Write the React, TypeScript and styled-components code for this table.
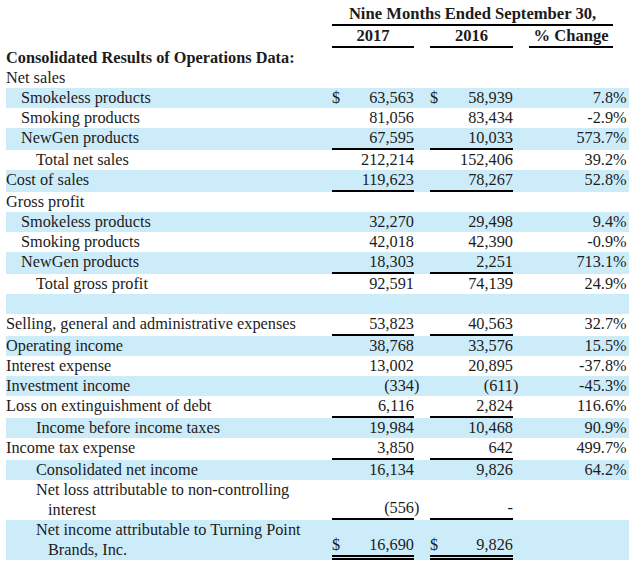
import React from "react";
import styled, { createGlobalStyle, css } from "styled-components";

const GlobalStyle = createGlobalStyle`
  html, body {
    margin: 0;
    padding: 0;
    background: #ffffff;
  }
  body {
    font-family: "Liberation Serif", "Times New Roman", serif;
  }
`;

const SHADE = "#cdecfa";
const INK = "#1c1c1c";

type Rule = "single" | "double" | undefined;

const Page = styled.div`
  padding: 4px 0 0 6px;
`;

const Table = styled.table`
  border-collapse: separate;
  border-spacing: 0;
  table-layout: fixed;
  width: 623px;
  font-size: 16.3px;
  line-height: 20px;
  color: ${INK};
`;

const Row = styled.tr<{ $shaded?: boolean }>`
  background: ${(p) => (p.$shaded ? SHADE : "transparent")};
`;

const cellBase = css`
  padding: 0;
  vertical-align: bottom;
  white-space: nowrap;
`;

/* A rule under a figure; "ghost" keeps the same depth without a visible line so
   every value in the row sits on one baseline. */
const ruleCss = (rule: Rule, ghost = false) => {
  const color = ghost ? "transparent" : "#000";
  if (rule === "single") {
    return css`
      border-bottom: 2px solid ${color};
    `;
  }
  if (rule === "double") {
    return css`
      border-bottom: 5px double ${color};
    `;
  }
  return css``;
};

const HeadCell = styled.th<{ $ruled?: boolean }>`
  ${cellBase}
  font-size: 16.6px;
  font-weight: bold;
  text-align: center;
  ${(p) => (p.$ruled ? ruleCss("single") : "")}
`;

const LabelCell = styled.td<{ $indent: number; $bold?: boolean }>`
  ${cellBase}
  white-space: normal;
  vertical-align: top;
  text-align: left;
  font-weight: ${(p) => (p.$bold ? "bold" : "normal")};
  padding-left: ${(p) => p.$indent + 12}px;
  text-indent: -12px;
`;

const SignCell = styled.td<{ $rule?: Rule }>`
  ${cellBase}
  text-align: left;
  ${(p) => ruleCss(p.$rule)}
`;

const NumCell = styled.td<{ $rule?: Rule }>`
  ${cellBase}
  text-align: right;
  ${(p) => ruleCss(p.$rule)}
`;

const ParenCell = styled.td<{ $rule?: Rule }>`
  ${cellBase}
  text-align: left;
  ${(p) => ruleCss(p.$rule, true)}
`;

const GapCell = styled.td`
  ${cellBase}
`;

const PctCell = styled.td<{ $rule?: Rule }>`
  ${cellBase}
  text-align: right;
  ${(p) => ruleCss(p.$rule, true)}
`;

const PctSignCell = styled.td<{ $rule?: Rule }>`
  ${cellBase}
  text-align: left;
  ${(p) => ruleCss(p.$rule, true)}
`;

type Amount = { value: string; sign?: boolean; neg?: boolean };

type Line = {
  label?: string;
  indent?: number;
  bold?: boolean;
  a?: Amount;
  b?: Amount;
  pct?: string;
  rule?: Rule;
};

const n = (value: string, extra: Partial<Amount> = {}): Amount => ({ value, ...extra });

const lines: Line[] = [
  { label: "Consolidated Results of Operations Data:", bold: true },
  { label: "Net sales" },
  { label: "Smokeless products", indent: 15, a: n("63,563", { sign: true }), b: n("58,939", { sign: true }), pct: "7.8" },
  { label: "Smoking products", indent: 15, a: n("81,056"), b: n("83,434"), pct: "-2.9" },
  { label: "NewGen products", indent: 15, a: n("67,595"), b: n("10,033"), pct: "573.7", rule: "single" },
  { label: "Total net sales", indent: 30, a: n("212,214"), b: n("152,406"), pct: "39.2" },
  { label: "Cost of sales", a: n("119,623"), b: n("78,267"), pct: "52.8", rule: "single" },
  { label: "Gross profit" },
  { label: "Smokeless products", indent: 15, a: n("32,270"), b: n("29,498"), pct: "9.4" },
  { label: "Smoking products", indent: 15, a: n("42,018"), b: n("42,390"), pct: "-0.9" },
  { label: "NewGen products", indent: 15, a: n("18,303"), b: n("2,251"), pct: "713.1", rule: "single" },
  { label: "Total gross profit", indent: 30, a: n("92,591"), b: n("74,139"), pct: "24.9" },
  {},
  { label: "Selling, general and administrative expenses", a: n("53,823"), b: n("40,563"), pct: "32.7", rule: "single" },
  { label: "Operating income", a: n("38,768"), b: n("33,576"), pct: "15.5" },
  { label: "Interest expense", a: n("13,002"), b: n("20,895"), pct: "-37.8" },
  { label: "Investment income", a: n("334", { neg: true }), b: n("611", { neg: true }), pct: "-45.3" },
  { label: "Loss on extinguishment of debt", a: n("6,116"), b: n("2,824"), pct: "116.6", rule: "single" },
  { label: "Income before income taxes", indent: 30, a: n("19,984"), b: n("10,468"), pct: "90.9" },
  { label: "Income tax expense", a: n("3,850"), b: n("642"), pct: "499.7", rule: "single" },
  { label: "Consolidated net income", indent: 30, a: n("16,134"), b: n("9,826"), pct: "64.2" },
  { label: "Net loss attributable to non-controlling interest", indent: 30, a: n("556", { neg: true }), b: n("-"), rule: "single" },
  { label: "Net income attributable to Turning Point Brands, Inc.", indent: 30, a: n("16,690", { sign: true }), b: n("9,826", { sign: true }), rule: "double" },
];

const FIRST_SHADED = 2;

const AmountCells: React.FC<{ amt?: Amount; rule?: Rule }> = ({ amt, rule }) => (
  <>
    <SignCell $rule={rule}>{amt?.sign ? "$" : ""}</SignCell>
    <NumCell $rule={rule}>{amt ? (amt.neg ? `(${amt.value}` : amt.value) : ""}</NumCell>
    <ParenCell $rule={rule}>{amt?.neg ? ")" : ""}</ParenCell>
  </>
);

export default function App() {
  return (
    <>
      <GlobalStyle />
      <Page>
        <Table>
          <colgroup>
            <col style={{ width: 326 }} />
            <col style={{ width: 13 }} />
            <col style={{ width: 69 }} />
            <col style={{ width: 8 }} />
            <col style={{ width: 8 }} />
            <col style={{ width: 13 }} />
            <col style={{ width: 70 }} />
            <col style={{ width: 8 }} />
            <col style={{ width: 8 }} />
            <col style={{ width: 84 }} />
            <col style={{ width: 16 }} />
          </colgroup>
          <thead>
            <Row>
              <HeadCell />
              <HeadCell colSpan={9} $ruled>
                Nine Months Ended September 30,
              </HeadCell>
              <HeadCell />
            </Row>
            <Row>
              <HeadCell />
              <HeadCell colSpan={2} $ruled>
                2017
              </HeadCell>
              <HeadCell />
              <HeadCell />
              <HeadCell colSpan={2} $ruled>
                2016
              </HeadCell>
              <HeadCell />
              <HeadCell />
              <HeadCell $ruled>% Change</HeadCell>
              <HeadCell />
            </Row>
          </thead>
          <tbody>
            {lines.map((line, i) => {
              const shaded = i >= FIRST_SHADED && (i - FIRST_SHADED) % 2 === 0;
              const rule = line.a ? line.rule : undefined;
              return (
                <Row key={i} $shaded={shaded}>
                  <LabelCell $indent={line.indent ?? 0} $bold={line.bold}>
                    {line.label ?? "\u00a0"}
                  </LabelCell>
                  <AmountCells amt={line.a} rule={rule} />
                  <GapCell />
                  <AmountCells amt={line.b} rule={rule} />
                  <GapCell />
                  <PctCell $rule={rule}>{line.pct ?? ""}</PctCell>
                  <PctSignCell $rule={rule}>{line.pct ? "%" : ""}</PctSignCell>
                </Row>
              );
            })}
          </tbody>
        </Table>
      </Page>
    </>
  );
}
